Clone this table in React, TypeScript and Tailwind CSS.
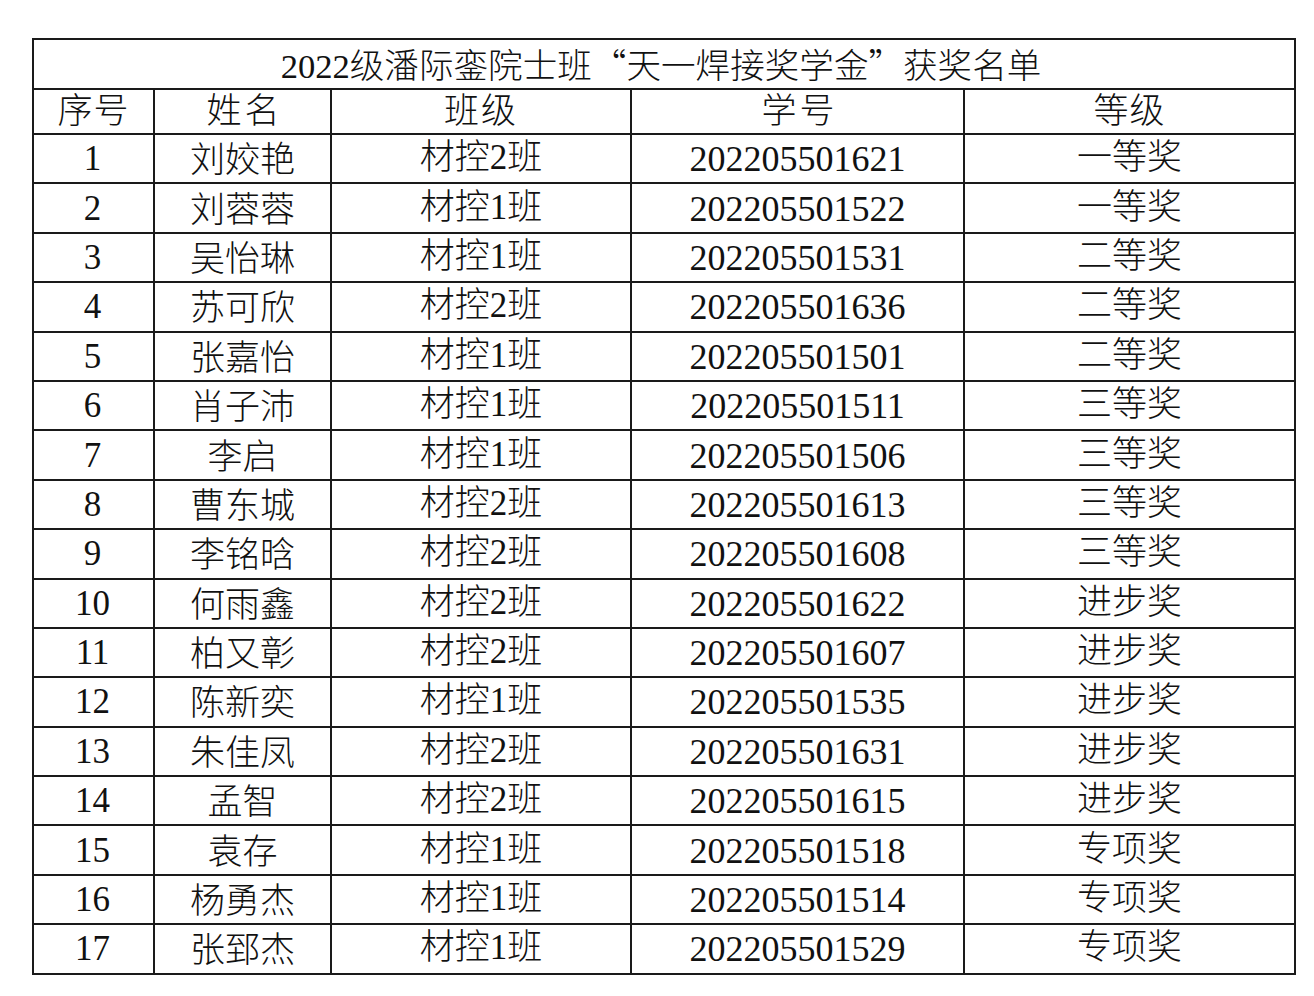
const rows: [string, string, string, string, string][] = [
  ["1", "刘姣艳", "材控2班", "202205501621", "一等奖"],
  ["2", "刘蓉蓉", "材控1班", "202205501522", "一等奖"],
  ["3", "吴怡琳", "材控1班", "202205501531", "二等奖"],
  ["4", "苏可欣", "材控2班", "202205501636", "二等奖"],
  ["5", "张嘉怡", "材控1班", "202205501501", "二等奖"],
  ["6", "肖子沛", "材控1班", "202205501511", "三等奖"],
  ["7", "李启", "材控1班", "202205501506", "三等奖"],
  ["8", "曹东城", "材控2班", "202205501613", "三等奖"],
  ["9", "李铭晗", "材控2班", "202205501608", "三等奖"],
  ["10", "何雨鑫", "材控2班", "202205501622", "进步奖"],
  ["11", "柏又彰", "材控2班", "202205501607", "进步奖"],
  ["12", "陈新奕", "材控1班", "202205501535", "进步奖"],
  ["13", "朱佳凤", "材控2班", "202205501631", "进步奖"],
  ["14", "孟智", "材控2班", "202205501615", "进步奖"],
  ["15", "袁存", "材控1班", "202205501518", "专项奖"],
  ["16", "杨勇杰", "材控1班", "202205501514", "专项奖"],
  ["17", "张郅杰", "材控1班", "202205501529", "专项奖"],
];

const cell = "border-2 border-[#1a1a1a] p-0 text-center align-middle leading-none";
const cjk = "font-['Noto_Sans_CJK_SC',sans-serif]";

export default function App() {
  return (
    <div className="min-h-[996px] bg-white pl-[32px] pt-[38px] font-['Liberation_Serif','Noto_Sans_CJK_SC',serif] text-[35px] font-light text-[#111]">
      <table className="w-[1264px] table-fixed border-collapse">
        <colgroup>
          <col className="w-[121px]" />
          <col className="w-[177px]" />
          <col className="w-[300px]" />
          <col className="w-[333px]" />
          <col />
        </colgroup>
        <tbody>
          <tr className="h-[50px]">
            <td colSpan={5} className={`${cell} pt-[2px] pr-[6px] text-[34.6px]`}>
              2022级潘际銮院士班<span className={cjk}>“</span>天一焊接奖学金<span className={cjk}>”</span>获奖名单
            </td>
          </tr>
          <tr className="h-[45px]">
            <td className={`${cell} tracking-[1px]`}>序号</td>
            <td className={`${cell} pl-[4px] tracking-[3px]`}>姓名</td>
            <td className={`${cell} tracking-[2px]`}>班级</td>
            <td className={`${cell} pl-[4px] tracking-[3px]`}>学号</td>
            <td className={`${cell} tracking-[1px]`}>等级</td>
          </tr>
          {rows.map(([no, name, cls, id, level]) => (
            <tr key={no} className="h-[49.4px]">
              <td className={`${cell} pr-[2px]`}>{no}</td>
              <td className={`${cell} pt-[4px]`}>{name}</td>
              <td className={`${cell} pb-[2px]`}>{cls}</td>
              <td className={`${cell} pt-[1px] text-[36px]`}>{id}</td>
              <td className={`${cell} pb-[2px]`}>{level}</td>
            </tr>
          ))}
        </tbody>
      </table>
    </div>
  );
}
